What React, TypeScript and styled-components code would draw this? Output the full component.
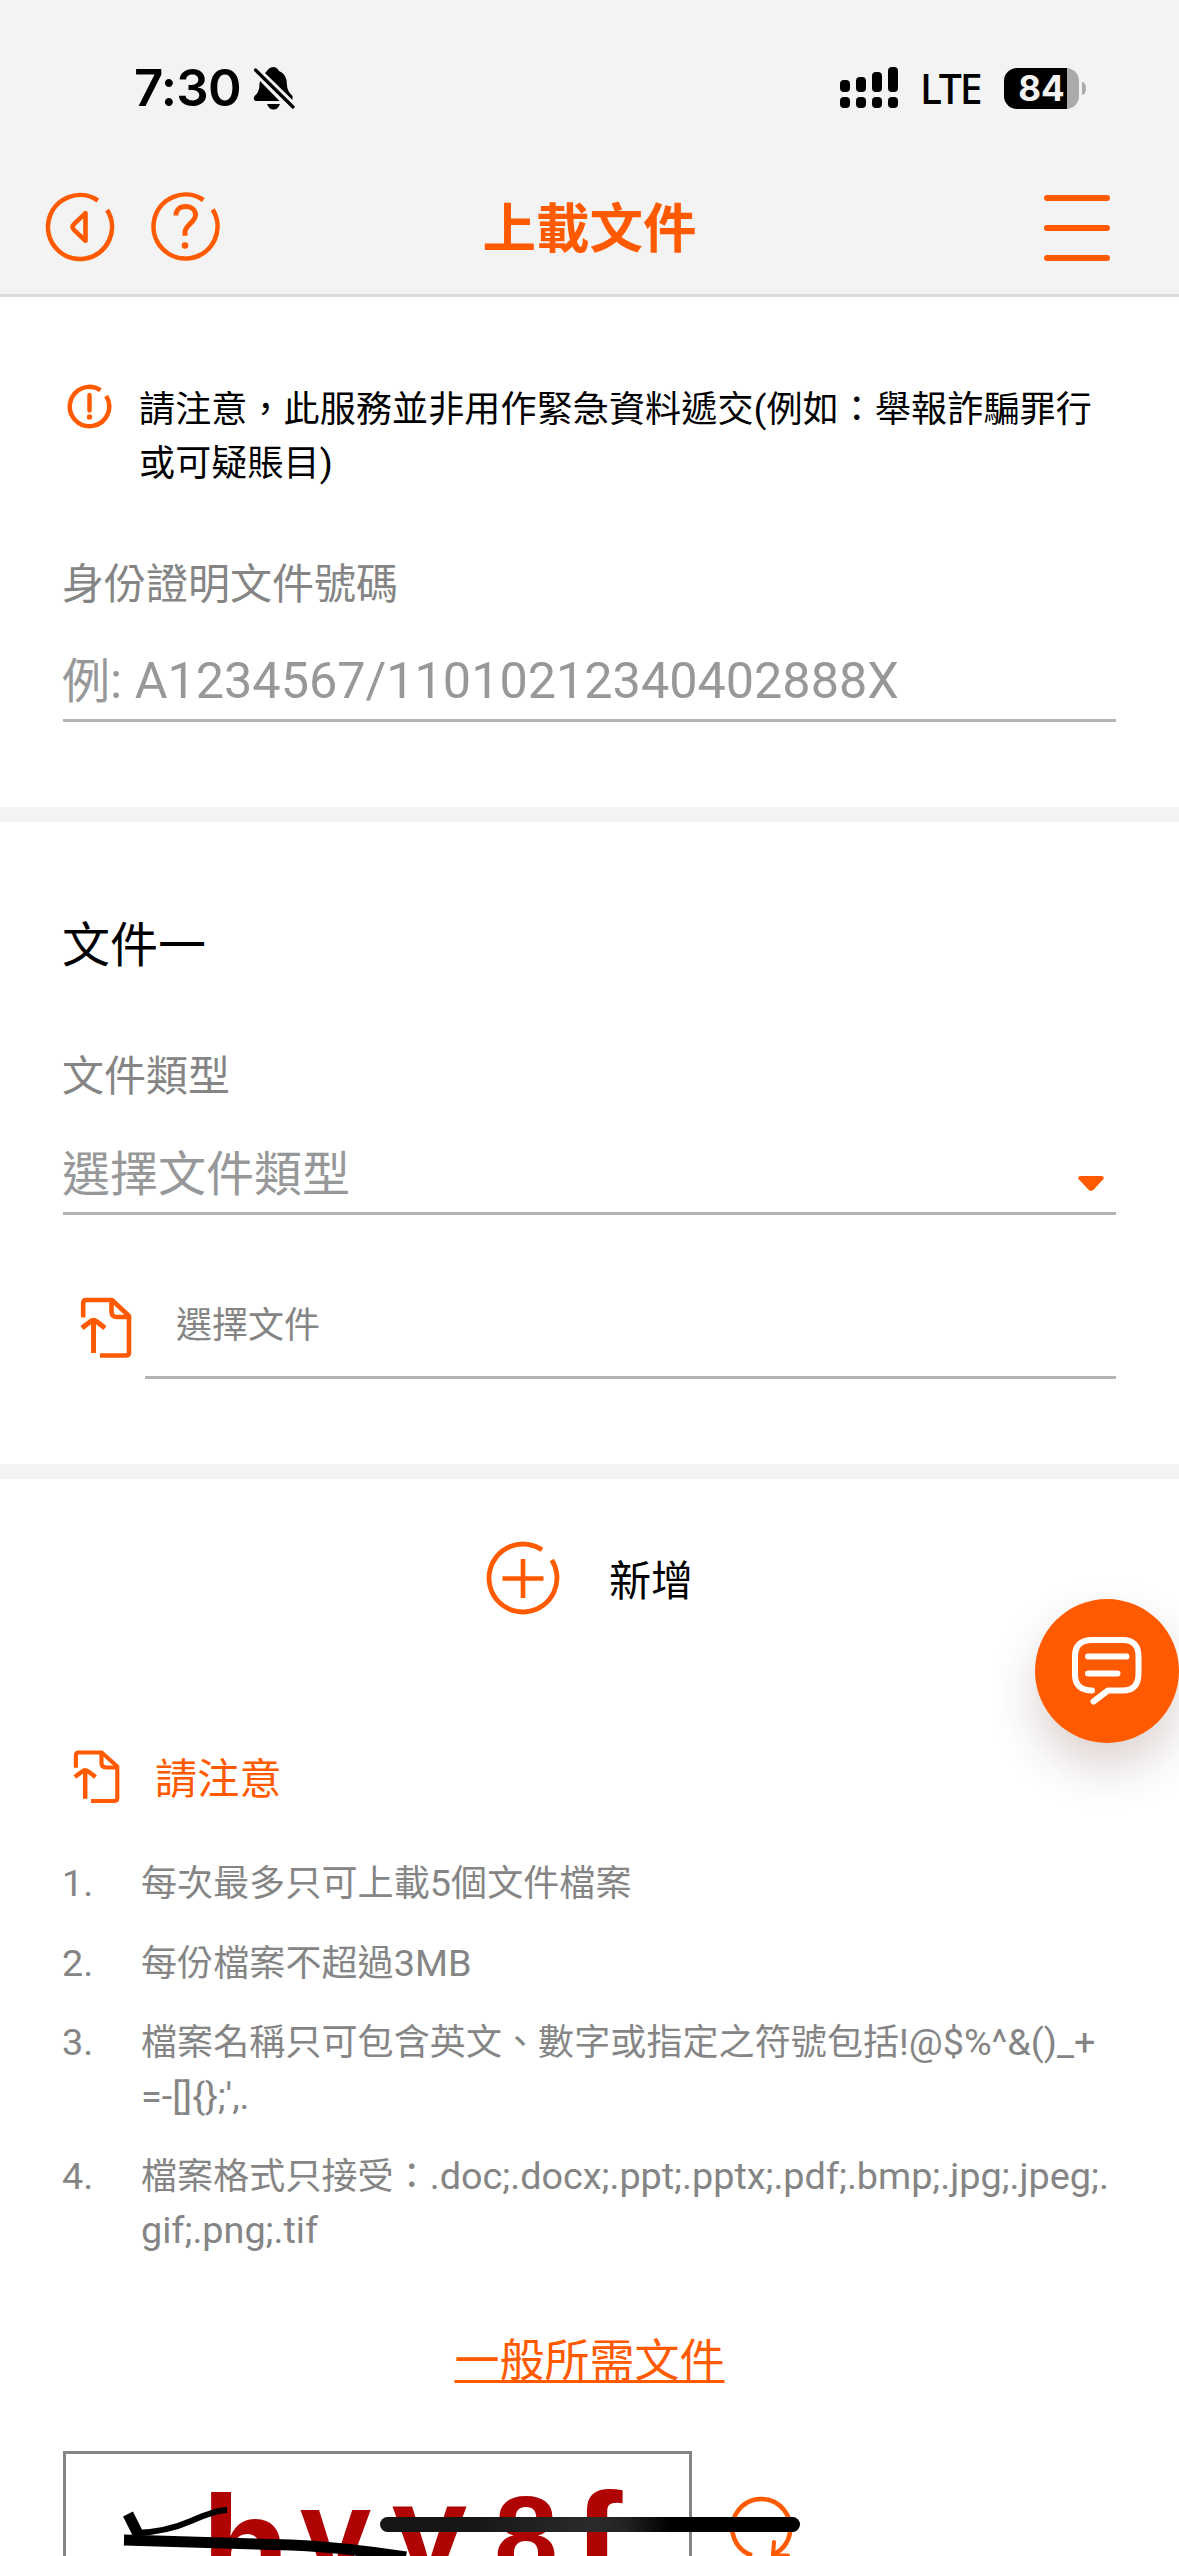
import React from "react";
import styled, { createGlobalStyle } from "styled-components";

const ORANGE = "#ff5a00";
const GREY = "#858585";

const GlobalStyle = createGlobalStyle`
  *, *::before, *::after { box-sizing: border-box; }
  html, body { margin: 0; padding: 0; background: #fff; }
  svg { display: block; flex: none; }
`;

const Screen = styled.div`
  position: relative;
  width: 1179px;
  height: 2556px;
  overflow: hidden;
  background: #fff;
  color: #000;
  font-family: Roboto, "Noto Sans CJK TC", sans-serif;
`;

/* Latin runs sit slightly larger than the Chinese text around them. */
const Latin = styled.span`
  font-size: 1.05em;
  letter-spacing: -0.03px;
  line-height: 1;
`;

const Header = styled.header`
  height: 297px;
  background: #f3f3f3;
  border-bottom: 3px solid #dadada;
`;

const StatusBar = styled.div`
  height: 160px;
  padding: 16px 93px 0 134px;
  display: flex;
  align-items: center;
  font-family: Inter, "Liberation Sans", sans-serif;
`;

const Clock = styled.span`
  width: 119px;
  font-size: 51px;
  font-weight: 600;
  letter-spacing: -0.8px;
  line-height: 60px;
  white-space: nowrap;
`;

const StatusIcons = styled.div`
  margin-left: auto;
  display: flex;
  align-items: center;
`;

const Network = styled.span`
  width: 84px;
  margin-left: 22px;
  font-family: "Noto Sans", sans-serif;
  font-size: 41px;
  font-weight: 500;
  letter-spacing: -2.2px;
  line-height: 50px;
`;

const Battery = styled.div`
  width: 75px;
  height: 41px;
  margin-right: 3px;
  border-radius: 13px;
  background: linear-gradient(to right, #000 63px, #aaa 63px);
  color: #f3f3f3;
  font-size: 35px;
  font-weight: 700;
  line-height: 41px;
  text-align: center;
`;

const BatteryNub = styled.div`
  width: 4px;
  height: 13px;
  border-radius: 0 4px 4px 0 / 0 7px 7px 0;
  background: #aaa;
`;

const NavBar = styled.nav`
  height: 134px;
  padding: 0 69px 0 44px;
  display: grid;
  grid-template-columns: 1fr auto 1fr;
  align-items: center;
`;

const NavGroup = styled.div`
  display: flex;
  gap: 34px;
`;

const Title = styled.h1`
  margin: 0;
  padding: 6px 0 0 25px;
  color: ${ORANGE};
  font-size: 53.5px;
  font-weight: 700;
  line-height: 70px;
`;

const MenuButton = styled.div`
  justify-self: end;
  width: 66px;
  height: 66px;
  margin-top: 2px;
  display: flex;
  flex-direction: column;
  justify-content: space-between;
`;

const MenuLine = styled.span`
  height: 6px;
  border-radius: 3px;
  background: ${ORANGE};
`;

const Section = styled.section<{ $top: number; $bottom: number; $divider?: boolean }>`
  padding: ${(p) => p.$top}px 63px ${(p) => p.$bottom}px;
  border-bottom: ${(p) => (p.$divider ? "15px solid #f3f3f3" : "none")};
`;

const Notice = styled.div`
  display: flex;
  align-items: flex-start;
  padding-left: 3px;
`;

const NoticeText = styled.p`
  margin: 0 0 0 27px;
  font-size: 36px;
  letter-spacing: 0.15px;
  line-height: 54px;
  white-space: nowrap;
`;

const Heading = styled.h2`
  margin: 0 0 0 -1px;
  font-size: 48px;
  font-weight: 400;
  line-height: 66px;
`;

const Label = styled.div<{ $gap: number }>`
  margin: ${(p) => p.$gap}px 0 0 -1px;
  color: ${GREY};
  font-size: 42px;
  line-height: 60px;
`;

const Field = styled.div<{ $gap: number; $pad: number }>`
  margin-top: ${(p) => p.$gap}px;
  padding-bottom: ${(p) => p.$pad}px;
  border-bottom: 3px solid #b4b4b4;
  display: flex;
  align-items: center;
  justify-content: space-between;
  color: #979899;
  font-size: 48px;
  line-height: 60px;
`;

const FieldText = styled.span`
  margin-left: -1px;
`;

const CaretBox = styled.span`
  padding: 17px 12px 0 0;
`;

const FileRow = styled.div`
  display: flex;
  align-items: flex-start;
  margin-top: 80px;
  padding-left: 17px;
`;

const FileIconBox = styled.div`
  padding-top: 2px;
`;

const FileField = styled.div`
  flex: 1;
  margin-left: 13px;
  padding: 4px 0 23px 31px;
  border-bottom: 3px solid #b4b4b4;
  color: ${GREY};
  font-size: 36px;
  line-height: 54px;
`;

const AddRow = styled.div`
  height: 76px;
  display: flex;
  align-items: center;
  padding-left: 422px;
  font-size: 42px;
  line-height: 60px;
`;

const AddText = styled.span`
  margin: 8px 0 0 48px;
`;

const NotesTitle = styled.div`
  height: 66px;
  margin-top: 128px;
  padding-left: 10px;
  display: flex;
  align-items: center;
  color: ${ORANGE};
  font-size: 42px;
  line-height: 60px;
`;

const NotesText = styled.span`
  margin: 6px 0 0 35px;
  letter-spacing: 0.3px;
`;

const Notes = styled.ol`
  margin: 47px 0 0;
  padding: 0;
  list-style: none;
  display: flex;
  flex-direction: column;
  gap: 25.5px;
  color: ${GREY};
  font-size: 36px;
  line-height: 54px;
`;

const Note = styled.li`
  display: grid;
  grid-template-columns: 79px 1fr;
  margin-left: -1px;
  letter-spacing: 0.1px;
  white-space: nowrap;
`;

const NoteLine = styled.div`
  height: 54px;
`;

const LinkRow = styled.div`
  height: 60px;
  margin-top: 74.5px;
  text-align: center;
  font-size: 45px;
  line-height: 60px;
`;

const DocLink = styled.a`
  color: ${ORANGE};
  text-decoration: underline;
  text-decoration-thickness: 3px;
  text-decoration-skip-ink: none;
  text-underline-offset: 3px;
`;

const CaptchaRow = styled.div`
  margin-top: 59px;
  display: flex;
  align-items: flex-start;
  gap: 36px;
`;

const CaptchaFrame = styled.div`
  width: 629px;
  height: 180px;
  border: 3px solid ${GREY};
`;

const RefreshBox = styled.div`
  padding-top: 43px;
`;

const ChatButton = styled.div`
  position: absolute;
  right: 0;
  top: 1599px;
  width: 144px;
  height: 144px;
  border-radius: 50%;
  background: ${ORANGE};
  box-shadow: 0 24px 48px rgba(80, 30, 20, 0.2);
`;

const HomeIndicator = styled.div`
  position: absolute;
  left: 380px;
  top: 2517px;
  width: 420px;
  height: 15px;
  border-radius: 8px;
  background: linear-gradient(to right, #161616 0, #161616 90px, #2b2b2b 215px, #222 245px, #000 290px);
`;

const stroke = { fill: "none", stroke: ORANGE, strokeLinecap: "butt" as const };

/** Circle outline with an opening at its upper right. */
const OpenRing = ({ c, r, w }: { c: number; r: number; w: number }) => {
  const at = (deg: number) => {
    const a = (deg * Math.PI) / 180;
    return `${(c + r * Math.cos(a)).toFixed(2)} ${(c + r * Math.sin(a)).toFixed(2)}`;
  };
  return <path d={`M${at(-32)}A${r} ${r} 0 1 1 ${at(-56)}`} {...stroke} strokeWidth={w} />;
};

const BackIcon = () => (
  <svg width="72" height="72" viewBox="0 0 72 72">
    <OpenRing c={36} r={32} w={4.6} />
    <path d="M41.5 22.2V49.8L30 38.9Q27 36 30 33.1Z" {...stroke} strokeWidth="4.6" strokeLinejoin="round" />
  </svg>
);

const HelpIcon = () => (
  <svg width="72" height="72" viewBox="0 0 72 72">
    <OpenRing c={35.5} r={32} w={4.6} />
    <path
      d="M26 24.5C26 18.5 30 15.6 35.5 15.6C41.5 15.6 45.5 19 45.5 24C45.5 31 35 34.5 35 41V44.8"
      {...stroke}
      strokeWidth="5"
    />
    <circle cx="35" cy="54.5" r="3.3" fill={ORANGE} />
  </svg>
);

const AlertIcon = () => (
  <svg width="46" height="46" viewBox="0 0 46 46">
    <OpenRing c={23.5} r={19.7} w={4.5} />
    <path d="M23.5 12V27.5" {...stroke} strokeWidth="4.4" strokeLinecap="round" />
    <circle cx="23.5" cy="34" r="2.7" fill={ORANGE} />
  </svg>
);

const AddIcon = () => (
  <svg width="76" height="76" viewBox="0 0 76 76">
    <OpenRing c={38} r={34} w={4.8} />
    <path d="M38 19V58M17.5 38.5H58.5" {...stroke} strokeWidth="4.6" />
  </svg>
);

const UploadIcon = ({ w, h }: { w: number; h: number }) => (
  <svg width={w} height={h} viewBox="0 0 52 62" preserveAspectRatio="none">
    <g {...stroke} strokeWidth="4.6" strokeLinejoin="round">
      <path d="M3.2 20.5V6Q3.2 3 6.2 3H32L49 19V55.5Q49 58.5 46 58.5H20" />
      <path d="M31.5 3V14.5Q31.5 20 37 20H49" />
      <path d="M13.5 56V24" strokeWidth="5" />
      <path d="M2 31L10.5 24.5Q13.5 22 16.5 24.5L25 31" strokeWidth="5" />
    </g>
  </svg>
);

const MutedBell = () => (
  <svg width="42" height="44" viewBox="0 0 42 44">
    <path d="M12 7Q14 5 15 3.5Q17 1 20 1Q24 1 26 5Q34 8 34 19Q34 25 39.5 30V34Z" />
    <path d="M7 15L26.5 35H3Q0.5 35 0.8 32Q1.2 30 4 27.5Q6.5 24 6.5 18Z" />
    <path d="M14 38H27Q25 43.5 20.5 43.5Q16 43.5 14 38Z" />
    <path d="M2.5 4L40 41" stroke="#000" strokeWidth="3.2" strokeLinecap="round" />
  </svg>
);

const SignalIcon = () => (
  <svg width="58" height="42" viewBox="0 0 58 42">
    {[13, 10, 5, 0].map((y, i) => (
      <g key={y}>
        <rect x={i * 16} y={y} width="10" height={25 - y} rx="4" />
        <rect x={i * 16} y="30" width="10" height="11" rx="4" />
      </g>
    ))}
  </svg>
);

const Caret = () => (
  <svg width="26" height="16" viewBox="0 0 26 16">
    <path d="M2 0H24Q26.5 1 25.5 3L15.5 13.8Q13 16 10.5 13.8L0.5 3Q-0.5 1 2 0Z" fill={ORANGE} />
  </svg>
);

const ChatIcon = () => (
  <svg width="144" height="144" viewBox="0 0 144 144">
    <g fill="none" stroke="#fff" strokeWidth="6" strokeLinecap="round" strokeLinejoin="round">
      <path d="M57 91.5C46 91.5 40 86 40 76V57C40 46.5 46 41 57 41H88C98 41 103.5 46.5 103.5 57V75C103.5 86 98 91.5 88 91.5H73L58.5 102.5" />
      <path d="M53 57.5H91.5M53 74.5H82.5" />
    </g>
  </svg>
);

const CAPTCHA_LETTERS = [
  { t: "h", x: 135, y: 143, size: 145 },
  { t: "v", x: 234, y: 124, size: 128 },
  { t: "v", x: 326, y: 124, size: 135 },
  { t: "8", x: 428, y: 123, size: 115 },
  { t: "f", x: 507, y: 143, size: 148 },
];

const Captcha = () => (
  <svg width="623" height="174" viewBox="0 0 623 174">
    <g fill="#b00404" fontFamily="Liberation Sans, sans-serif" fontWeight="700">
      {CAPTCHA_LETTERS.map((l) => (
        <text key={l.x} x={l.x} y={l.y} fontSize={l.size}>
          {l.t}
        </text>
      ))}
    </g>
    <g fill="none" stroke="#000">
      <path d="M62 60L72 80" strokeWidth="11" />
      <path d="M70 79Q100 78 125 67T161 56" strokeWidth="6" />
      <path d="M58 86L225 91Q275 93 340 103" strokeWidth="11" />
    </g>
  </svg>
);

const RefreshIcon = () => (
  <svg width="68" height="70" viewBox="0 0 68 70">
    <path d="M24 61.5A29 29 0 1 1 44 61" {...stroke} strokeWidth="4.6" />
    <path d="M46 48L45 61.5H60" {...stroke} strokeWidth="4" strokeLinecap="round" strokeLinejoin="round" />
  </svg>
);

const NOTES: React.ReactNode[][] = [
  [
    <>
      每次最多只可上載<Latin>5</Latin>個文件檔案
    </>,
  ],
  [
    <>
      每份檔案不超過<Latin>3MB</Latin>
    </>,
  ],
  [
    <>
      檔案名稱只可包含英文、數字或指定之符號包括<Latin>!@$%^&amp;()_+</Latin>
    </>,
    <Latin>=-[]{"{}"};',.</Latin>,
  ],
  [
    <>
      檔案格式只接受：<Latin>.doc;.docx;.ppt;.pptx;.pdf;.bmp;.jpg;.jpeg;.</Latin>
    </>,
    <Latin>gif;.png;.tif</Latin>,
  ],
];

export default function App() {
  return (
    <Screen lang="zh-Hant">
      <GlobalStyle />
      <Header>
        <StatusBar>
          <Clock>7:30</Clock>
          <MutedBell />
          <StatusIcons>
            <SignalIcon />
            <Network>LTE</Network>
            <Battery>84</Battery>
            <BatteryNub />
          </StatusIcons>
        </StatusBar>
        <NavBar>
          <NavGroup>
            <BackIcon />
            <HelpIcon />
          </NavGroup>
          <Title>上載文件</Title>
          <MenuButton>
            <MenuLine />
            <MenuLine />
            <MenuLine />
          </MenuButton>
        </NavBar>
      </Header>

      <Section $top={86} $bottom={85} $divider>
        <Notice>
          <AlertIcon />
          <NoticeText>
            請注意，此服務並非用作緊急資料遞交<Latin>(</Latin>例如：舉報詐騙罪行
            <br />
            或可疑賬目<Latin>)</Latin>
          </NoticeText>
        </Notice>
        <Label $gap={64}>身份證明文件號碼</Label>
        <Field $gap={37} $pad={7}>
          <FieldText>
            例<Latin>: A1234567/11010212340402888X</Latin>
          </FieldText>
        </Field>
      </Section>

      <Section $top={91} $bottom={85} $divider>
        <Heading>文件一</Heading>
        <Label $gap={68}>文件類型</Label>
        <Field $gap={38} $pad={7}>
          <FieldText>選擇文件類型</FieldText>
          <CaretBox>
            <Caret />
          </CaretBox>
        </Field>
        <FileRow>
          <FileIconBox>
            <UploadIcon w={52} h={62} />
          </FileIconBox>
          <FileField>選擇文件</FileField>
        </FileRow>
      </Section>

      <Section $top={61} $bottom={0}>
        <AddRow>
          <AddIcon />
          <AddText>新增</AddText>
        </AddRow>
        <NotesTitle>
          <UploadIcon w={47} h={54} />
          <NotesText>請注意</NotesText>
        </NotesTitle>
        <Notes>
          {NOTES.map((lines, i) => (
            <Note key={i}>
              <span>
                <Latin>{i + 1}.</Latin>
              </span>
              <div>
                {lines.map((line, j) => (
                  <NoteLine key={j}>{line}</NoteLine>
                ))}
              </div>
            </Note>
          ))}
        </Notes>
        <LinkRow>
          <DocLink>一般所需文件</DocLink>
        </LinkRow>
        <CaptchaRow>
          <CaptchaFrame>
            <Captcha />
          </CaptchaFrame>
          <RefreshBox>
            <RefreshIcon />
          </RefreshBox>
        </CaptchaRow>
      </Section>

      <ChatButton>
        <ChatIcon />
      </ChatButton>
      <HomeIndicator />
    </Screen>
  );
}
